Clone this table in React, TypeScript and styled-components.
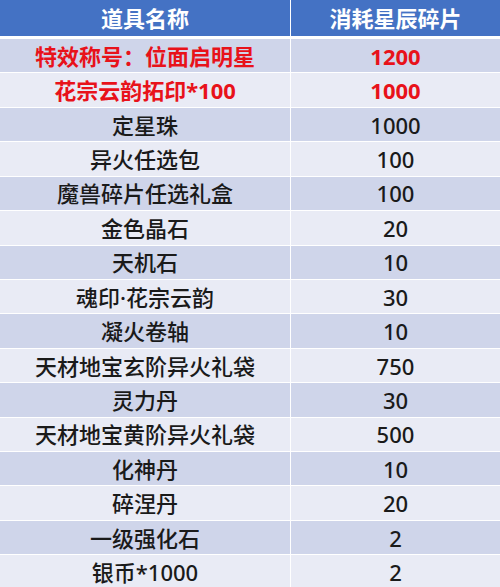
import React from "react";
import styled, { createGlobalStyle } from "styled-components";

const Global = createGlobalStyle`
  html, body { margin: 0; padding: 0; background: #ffffff; }
  body { font-family: "Noto Sans", "Noto Sans CJK SC", sans-serif; }
`;

const Table = styled.div`
  width: 500px;
  display: flex;
  flex-direction: column;
  gap: 1px;
  background: #ffffff;
  overflow: hidden;
  height: 587px;
`;

const Row = styled.div<{ $header?: boolean }>`
  display: grid;
  grid-template-columns: 290px 1fr;
  column-gap: 1px;
  height: ${(p) => (p.$header ? "36px" : "33.43px")};
  margin-bottom: ${(p) => (p.$header ? "2px" : "0")};
  flex-shrink: 0;
`;

const Cell = styled.div<{ $bg: string; $color: string; $bold?: boolean }>`
  display: flex;
  align-items: center;
  justify-content: center;
  background: ${(p) => p.$bg};
  color: ${(p) => p.$color};
  font-family: "Noto Sans", "Noto Sans CJK SC", sans-serif;
  font-size: 22px;
  font-weight: ${(p) => (p.$bold ? 700 : 500)};
  white-space: nowrap;
  line-height: 1;
`;

type Item = { name: string; cost: string; hot?: boolean };

const items: Item[] = [
  { name: "特效称号：位面启明星", cost: "1200", hot: true },
  { name: "花宗云韵拓印*100", cost: "1000", hot: true },
  { name: "定星珠", cost: "1000" },
  { name: "异火任选包", cost: "100" },
  { name: "魔兽碎片任选礼盒", cost: "100" },
  { name: "金色晶石", cost: "20" },
  { name: "天机石", cost: "10" },
  { name: "魂印·花宗云韵", cost: "30" },
  { name: "凝火卷轴", cost: "10" },
  { name: "天材地宝玄阶异火礼袋", cost: "750" },
  { name: "灵力丹", cost: "30" },
  { name: "天材地宝黄阶异火礼袋", cost: "500" },
  { name: "化神丹", cost: "10" },
  { name: "碎涅丹", cost: "20" },
  { name: "一级强化石", cost: "2" },
  { name: "银币*1000", cost: "2" },
];

const HEADER = "#4472c4";
const DARK = "#cfd5ea";
const LIGHT = "#e9ebf5";

export default function App() {
  return (
    <>
      <Global />
      <Table>
        <Row $header>
          <Cell $bg={HEADER} $color="#ffffff" $bold>道具名称</Cell>
          <Cell $bg={HEADER} $color="#ffffff" $bold>消耗星辰碎片</Cell>
        </Row>
        {items.map((it, i) => {
          const bg = i % 2 === 0 ? DARK : LIGHT;
          const color = it.hot ? "#e8121a" : "#1a1a1a";
          return (
            <Row key={it.name}>
              <Cell $bg={bg} $color={color} $bold={it.hot}>{it.name}</Cell>
              <Cell $bg={bg} $color={color} $bold={it.hot}>{it.cost}</Cell>
            </Row>
          );
        })}
      </Table>
    </>
  );
}
